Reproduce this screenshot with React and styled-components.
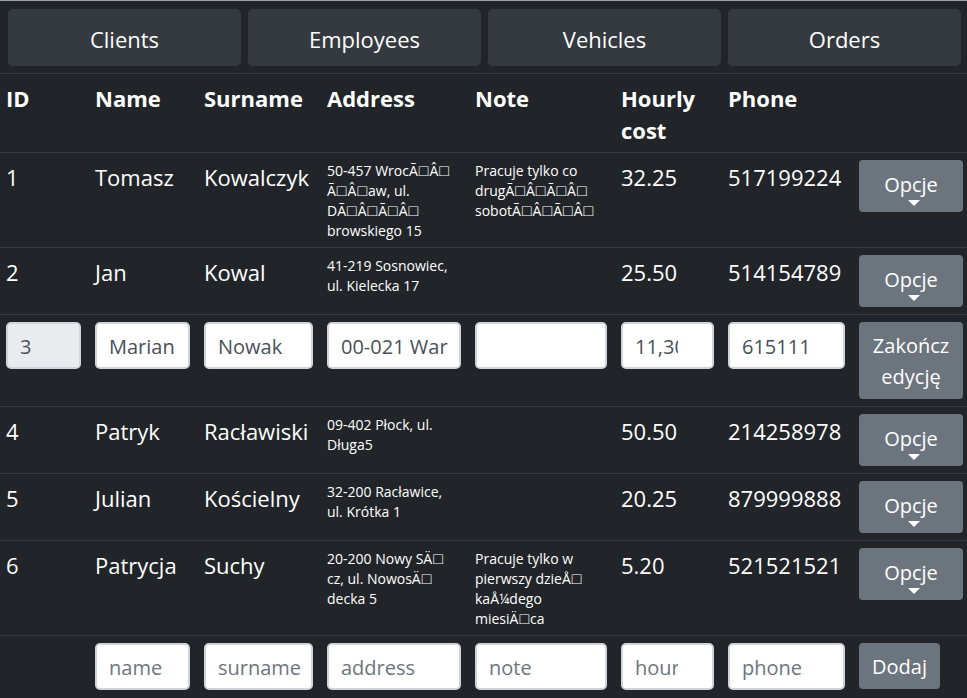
import React from 'react';
import styled, { createGlobalStyle, css } from 'styled-components';

const GlobalStyle = createGlobalStyle`
  *, *::before, *::after { box-sizing: border-box; }
  body {
    margin: 0;
    background: #212529;
    color: #fff;
    font-family: 'Open Sans', 'Noto Sans', sans-serif;
    font-size: 22px;
    line-height: 32px;
  }
  button, input { font: inherit; }
`;

const Page = styled.main`
  border-top: 1px solid #9ba3a5;
`;

const Nav = styled.nav`
  display: grid;
  grid-template-columns: repeat(4, 1fr);
  gap: 7px;
  padding: 8px 6px 7px 8px;
`;

const NavButton = styled.button`
  height: 57px;
  padding: 3px 12px 1px;
  border: 0;
  border-radius: 5px;
  background: #343a40;
  color: #fff;
  cursor: pointer;
`;

const Table = styled.table`
  width: 100%;
  table-layout: fixed;
  border-collapse: separate;
  border-spacing: 0;
`;

const Col = styled.col`
  width: ${(p) => p.$width}px;
`;

const cell = css`
  padding: 7px;
  border-top: 1px solid #32383e;
  text-align: left;
  vertical-align: top;
  &:first-child { padding-left: 6px; }
  &:last-child { padding-right: 4px; }
`;

const HeadCell = styled.th`
  ${cell}
  padding-top: 8px;
  padding-bottom: 6px;
  font-weight: 700;
`;

const Cell = styled.td`
  ${cell}
`;

const TextCell = styled(Cell)`
  padding-top: 8px;
  padding-bottom: 6px;
`;

const SmallText = styled.div`
  font-size: 14px;
  line-height: 20px;
  white-space: nowrap;
`;

const MissingGlyph = styled.span`
  margin: 0 1px;
  font-family: 'Liberation Sans', sans-serif;
  font-size: 16px;
  line-height: 1;
`;

const Field = styled.input`
  display: block;
  width: 100%;
  height: 47px;
  padding: 2px ${(p) => (p.$stepper ? 34 : 11)}px 0 12px;
  border: 2px solid #ced4da;
  border-radius: 5px;
  background: #fff;
  color: #495057;
  font-size: 20px;
  &::placeholder { color: #6c757d; opacity: 1; }
  &:disabled { background: #e9ecef; }
`;

const ActionButton = styled.button`
  display: ${(p) => (p.$inline ? 'inline-block' : 'block')};
  width: ${(p) => (p.$inline ? 'auto' : '100%')};
  padding: 8px 13px 7px;
  border: 0;
  border-radius: 4px;
  background: #6c757d;
  color: #fff;
  font-size: 20px;
  line-height: 31px;
  cursor: pointer;
  vertical-align: top;
`;

const OptionsButton = styled(ActionButton)`
  display: flex;
  flex-direction: column;
  align-items: center;
  padding: 9px 13px 6px;
`;

const Caret = styled.span`
  margin-left: 5px;
  border: 6px solid transparent;
  border-top-color: #fff;
  border-bottom: 0;
`;

const WIDTHS = [88, 109, 123, 148, 146, 107, 131, 115];
const HEADINGS = ['ID', 'Name', 'Surname', 'Address', 'Note', 'Hourly cost', 'Phone'];

const CLIENTS = [
  {
    id: 1, name: 'Tomasz', surname: 'Kowalczyk', cost: '32.25', phone: '517199224',
    address: ['50-457 WrocÃ□Â□', 'Ã□Â□aw, ul.', 'DÃ□Â□Ã□Â□', 'browskiego 15'],
    note: ['Pracuje tylko co', 'drugÃ□Â□Ã□Â□', 'sobotÃ□Â□Ã□Â□'],
  },
  {
    id: 2, name: 'Jan', surname: 'Kowal', cost: '25.50', phone: '514154789',
    address: ['41-219 Sosnowiec,', 'ul. Kielecka 17'], note: [],
  },
  {
    id: 3, name: 'Marian', surname: 'Nowak', cost: '11,30', phone: '615111',
    address: ['00-021 Warszawa'], note: [], editing: true,
  },
  {
    id: 4, name: 'Patryk', surname: 'Racławiski', cost: '50.50', phone: '214258978',
    address: ['09-402 Płock, ul.', 'Długa5'], note: [],
  },
  {
    id: 5, name: 'Julian', surname: 'Kościelny', cost: '20.25', phone: '879999888',
    address: ['32-200 Racławice,', 'ul. Krótka 1'], note: [],
  },
  {
    id: 6, name: 'Patrycja', surname: 'Suchy', cost: '5.20', phone: '521521521',
    address: ['20-200 Nowy SÄ□', 'cz, ul. NowosÄ□', 'decka 5'],
    note: ['Pracuje tylko w', 'pierwszy dzieÅ□', 'kaÅ¼dego', 'miesiÄ□ca'],
  },
];

const NEW_FIELDS = ['name', 'surname', 'address', 'note', 'hour', 'phone'];

function Lines({ lines }) {
  return lines.map((line) => (
    <SmallText key={line}>
      {line.split(/(□)/).map((part, i) =>
        part === '□' ? <MissingGlyph key={i}>□</MissingGlyph> : part
      )}
    </SmallText>
  ));
}

function ClientRow({ client }) {
  return (
    <tr>
      <TextCell>{client.id}</TextCell>
      <TextCell>{client.name}</TextCell>
      <TextCell>{client.surname}</TextCell>
      <TextCell><Lines lines={client.address} /></TextCell>
      <TextCell><Lines lines={client.note} /></TextCell>
      <TextCell>{client.cost}</TextCell>
      <TextCell>{client.phone}</TextCell>
      <Cell>
        <OptionsButton type="button" aria-haspopup="menu">
          Opcje
          <Caret />
        </OptionsButton>
      </Cell>
    </tr>
  );
}

function EditRow({ client }) {
  return (
    <tr>
      <Cell><Field aria-label="ID" defaultValue={client.id} disabled /></Cell>
      <Cell><Field aria-label="Name" defaultValue={client.name} /></Cell>
      <Cell><Field aria-label="Surname" defaultValue={client.surname} /></Cell>
      <Cell><Field aria-label="Address" defaultValue={client.address.join(' ')} /></Cell>
      <Cell><Field aria-label="Note" defaultValue={client.note.join(' ')} /></Cell>
      <Cell><Field aria-label="Hourly cost" inputMode="decimal" $stepper defaultValue={client.cost} /></Cell>
      <Cell><Field aria-label="Phone" inputMode="numeric" $stepper defaultValue={client.phone} /></Cell>
      <Cell><ActionButton type="button">Zakończ edycję</ActionButton></Cell>
    </tr>
  );
}

export default function App() {
  return (
    <Page>
      <GlobalStyle />
      <Nav>
        {['Clients', 'Employees', 'Vehicles', 'Orders'].map((label) => (
          <NavButton key={label} type="button">{label}</NavButton>
        ))}
      </Nav>
      <Table>
        <colgroup>
          {WIDTHS.map((width, i) => <Col key={i} $width={width} />)}
        </colgroup>
        <thead>
          <tr>
            {HEADINGS.map((heading) => <HeadCell key={heading} scope="col">{heading}</HeadCell>)}
            <HeadCell as="td" />
          </tr>
        </thead>
        <tbody>
          {CLIENTS.map((client) =>
            client.editing
              ? <EditRow key={client.id} client={client} />
              : <ClientRow key={client.id} client={client} />
          )}
          <tr>
            <Cell />
            {NEW_FIELDS.map((field) => (
              <Cell key={field}>
                <Field
                  aria-label={`New client ${field}`}
                  placeholder={field}
                  $stepper={field === 'hour' || field === 'phone'}
                />
              </Cell>
            ))}
            <Cell><ActionButton type="button" $inline>Dodaj</ActionButton></Cell>
          </tr>
        </tbody>
      </Table>
    </Page>
  );
}
